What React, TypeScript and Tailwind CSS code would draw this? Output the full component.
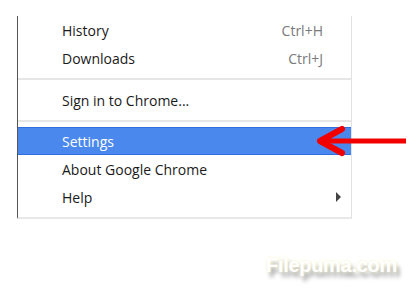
import React from "react"

type Item = { label: string; shortcut?: string; submenu?: boolean; active?: boolean }

const Row = ({ item }: { item: Item }) => (
  <div
    className={
      item.active
        ? "flex items-center h-[28px] pl-[44px] pr-[28px] bg-[#4a88ee] border-y border-[#2f6fe0] text-white"
        : "flex items-center h-[28px] pl-[44px] pr-[28px] text-[#1a1a1a]"
    }
  >
    <span className="flex-1">{item.label}</span>
    {item.shortcut && <span className="text-[#7a7a7a]">{item.shortcut}</span>}
    {item.submenu && (
      <span className="w-0 h-0 mr-[-18px] border-y-[5px] border-y-transparent border-l-[5px] border-l-[#444]" />
    )}
  </div>
)

const Separator = () => (
  <div className="my-[6px] h-[2px] border-y border-[#e6e6e6] bg-[#f4f4f4]" />
)

export default function App() {
  return (
    <div className="relative w-[412px] h-[308px] bg-white overflow-hidden font-['Open_Sans',sans-serif] text-[14px]">
      <div className="ml-[17px] mt-[16px] w-[335px] border-l border-l-[#555] border-r border-r-[#e2e2e2] border-b-2 border-b-[#e8e8e8] pb-[6px]">
        <Row item={{ label: "History", shortcut: "Ctrl+H" }} />
        <Row item={{ label: "Downloads", shortcut: "Ctrl+J" }} />
        <Separator />
        <Row item={{ label: "Sign in to Chrome..." }} />
        <div className="mt-[6px] mb-[5px] h-[2px] border-y border-[#e6e6e6] bg-[#f4f4f4]" />
        <Row item={{ label: "Settings", active: true }} />
        <Row item={{ label: "About Google Chrome" }} />
        <Row item={{ label: "Help", submenu: true }} />
      </div>

      <svg className="absolute left-[314px] top-[124px]" width="96" height="36" viewBox="0 0 96 36">
        <line x1="10" y1="17" x2="92" y2="17" stroke="#f20000" strokeWidth="5" />
        <polyline
          points="28,5 6,17 28,29"
          fill="none"
          stroke="#f20000"
          strokeWidth="6"
          strokeLinecap="round"
          strokeLinejoin="round"
        />
      </svg>

      <div className="absolute left-[266px] top-[252px] text-white font-bold text-[20px] leading-[26px] font-['Liberation_Sans',sans-serif] tracking-[-0.3px] [text-shadow:0_0_3px_#f5f2c8,3px_5px_4px_#9a9a9a]">
        Filepuma.com
      </div>
    </div>
  )
}
